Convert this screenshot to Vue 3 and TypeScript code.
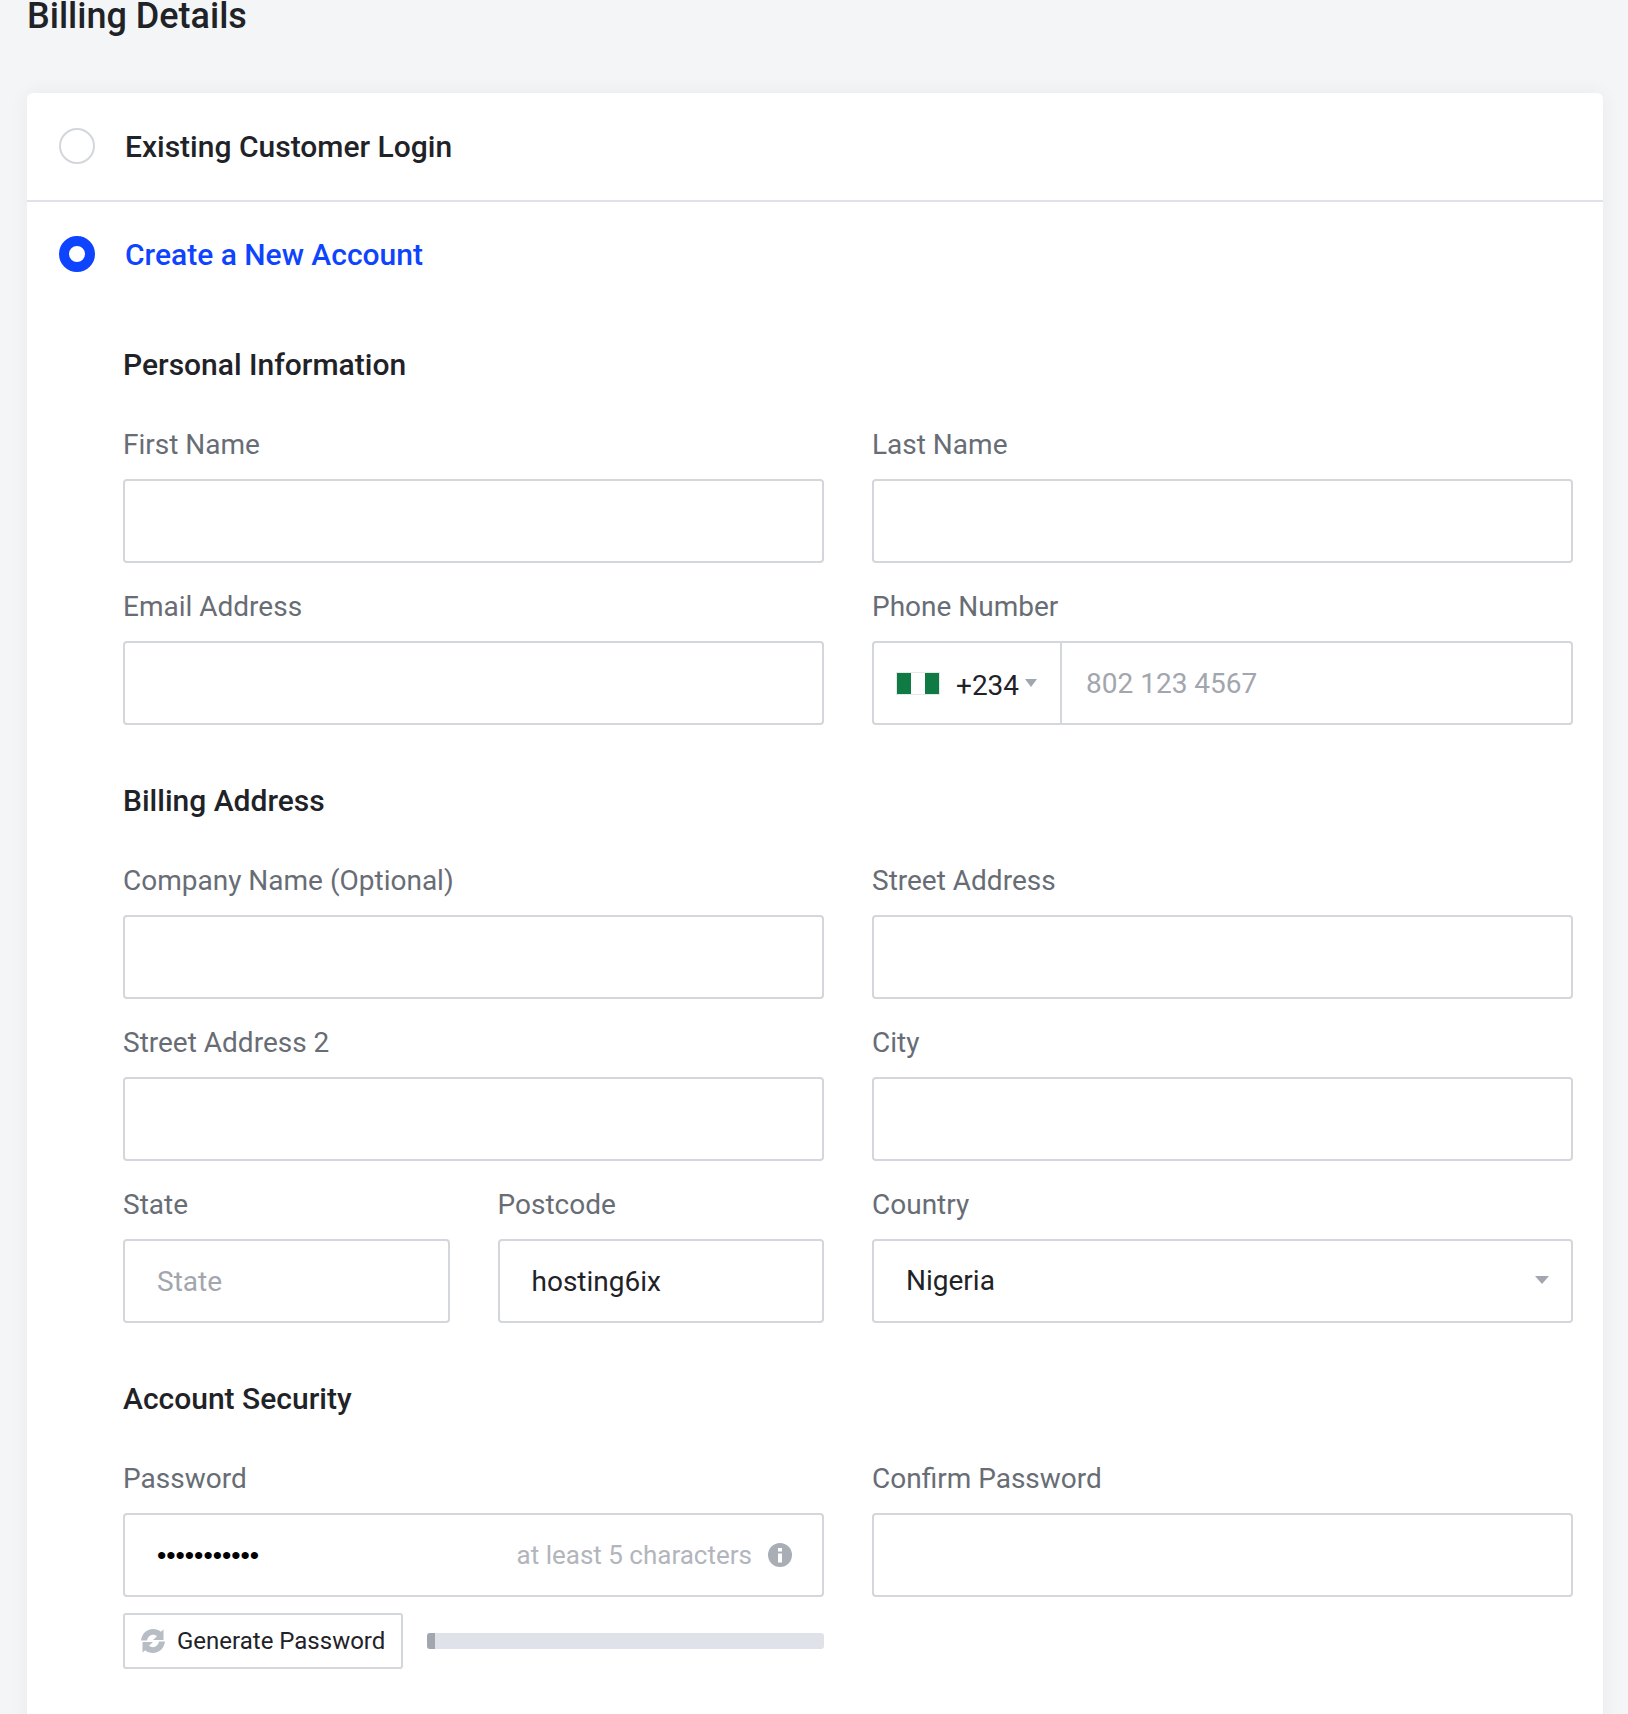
<template>
  <div class="page">
    <h1 class="page-title">Billing Details</h1>

    <div class="card">
      <div class="choice choice-login">
        <span class="radio"></span>
        <span class="choice-label">Existing Customer Login</span>
      </div>

      <div class="choice choice-new">
        <span class="radio radio-on"></span>
        <span class="choice-label choice-label-on">Create a New Account</span>
      </div>

      <div class="form">
        <h2 class="section-title">Personal Information</h2>
        <div class="grid">
          <label class="field" v-for="name in personalFields" :key="name">
            <span class="field-label">{{ name }}</span>
            <input class="text-input" type="text" />
          </label>
          <div class="field">
            <span class="field-label">Email Address</span>
            <input class="text-input" type="text" />
          </div>
          <div class="field">
            <span class="field-label">Phone Number</span>
            <div class="phone">
              <div class="phone-code">
                <span class="flag"><i></i><i></i><i></i></span>
                <span class="dial">+234</span>
                <span class="mini-caret"></span>
              </div>
              <input class="phone-input" type="text" placeholder="802 123 4567" />
            </div>
          </div>
        </div>

        <h2 class="section-title section-gap">Billing Address</h2>
        <div class="grid">
          <label class="field" v-for="name in addressFields" :key="name">
            <span class="field-label">{{ name }}</span>
            <input class="text-input" type="text" />
          </label>
          <div class="split">
            <div class="field">
              <span class="field-label">State</span>
              <input class="text-input" type="text" placeholder="State" />
            </div>
            <div class="field">
              <span class="field-label">Postcode</span>
              <input class="text-input" type="text" value="hosting6ix" />
            </div>
          </div>
          <div class="field">
            <span class="field-label">Country</span>
            <div class="select-wrap">
              <select class="text-input select">
                <option>Nigeria</option>
              </select>
              <span class="select-caret"></span>
            </div>
          </div>
        </div>

        <h2 class="section-title section-gap">Account Security</h2>
        <div class="grid">
          <div class="field">
            <span class="field-label">Password</span>
            <div class="password-wrap">
              <input class="text-input password" type="password" value="hosting6ix1" />
              <div class="password-hint">
                <span>at least 5 characters</span>
                <svg class="info-icon" viewBox="0 0 24 24" aria-hidden="true">
                  <circle cx="12" cy="12" r="12" />
                  <rect class="info-mark" x="10" y="5" width="4" height="3.5" />
                  <rect class="info-mark" x="10" y="10.5" width="4" height="9" />
                </svg>
              </div>
            </div>
            <div class="generate-row">
              <button class="generate-btn" type="button">
                <svg class="sync-icon" viewBox="0 0 24 24" aria-hidden="true">
                  <path d="M0 11.500C.8 5 5.500 0 12 0c3.200 0 5.800 1 7.800 2.800L22.500.500v10.500H12l4-3.800C15 6.400 13.600 5.800 12 5.800c-3 0-5.300 2.300-6 5.700z" />
                  <path d="M24 12.500C23.200 19 18.500 24 12 24c-3.200 0-5.800-1-7.800-2.800L1.500 23.500V13H12l-4 3.800c1 .8 2.400 1.400 4 1.400 3 0 5.300-2.300 6-5.700z" />
                </svg>
                <span>Generate Password</span>
              </button>
              <div class="strength">
                <div class="strength-fill" :style="{ width: strength + '%' }"></div>
              </div>
            </div>
          </div>
          <div class="field">
            <span class="field-label">Confirm Password</span>
            <input class="text-input" type="password" />
          </div>
        </div>
      </div>
    </div>
  </div>
</template>

<script setup lang="ts">
const personalFields: string[] = ['First Name', 'Last Name'];
const addressFields: string[] = ['Company Name (Optional)', 'Street Address', 'Street Address 2', 'City'];
const strength = 2;
</script>

<style>
body {
  background: #f4f5f7;
}
</style>

<style scoped>
.page {
  height: 1714px;
  overflow: hidden;
  padding: 0 25px 0 27px;
  box-sizing: border-box;
  font-family: Roboto, "Liberation Sans", sans-serif;
  color: #1f2328;
}
.page-title {
  margin: 0 0 61px;
  font-size: 36px;
  line-height: 32px;
  font-weight: 500;
}
.card {
  background: #fff;
  border-radius: 6px;
  box-shadow: 0 0 20px rgba(31, 35, 40, 0.05);
  padding-bottom: 100px;
}
.choice {
  display: flex;
  align-items: center;
  padding-left: 32px;
  gap: 30px;
}
.choice-login {
  height: 107px;
  border-bottom: 2px solid #dfe3e8;
}
.choice-new {
  height: 105px;
}
.radio {
  width: 36px;
  height: 36px;
  margin-top: -2px;
  box-sizing: border-box;
  border: 2px solid #d3d6db;
  border-radius: 50%;
  background: #fff;
}
.radio-on {
  border: 10px solid #0f44ff;
}
.choice-label {
  font-size: 30px;
  font-weight: 500;
}
.choice-label-on {
  color: #0f44ff;
}
.form {
  padding: 0 30px 0 96px;
}
.section-title {
  margin: 0;
  padding-top: 38px;
  font-size: 30px;
  line-height: 40px;
  font-weight: 500;
}
.section-gap {
  padding-top: 56px;
}
.grid {
  display: grid;
  grid-template-columns: 1fr 1fr;
  column-gap: 48px;
  row-gap: 26px;
  margin-top: 42px;
}
.split {
  display: grid;
  grid-template-columns: 1fr 1fr;
  column-gap: 48px;
}
.field {
  display: flex;
  flex-direction: column;
  min-width: 0;
}
.field-label {
  font-size: 28px;
  line-height: 36px;
  color: #686d75;
  margin-bottom: 16px;
}
.text-input {
  width: 100%;
  height: 84px;
  box-sizing: border-box;
  padding: 0 32px;
  border: 2px solid #d3d6db;
  border-radius: 4px;
  background: #fff;
  font-family: inherit;
  font-size: 28px;
  color: #1f2328;
  outline: none;
}
.text-input::placeholder,
.phone-input::placeholder {
  color: #a2a6ae;
  opacity: 1;
}
.phone {
  display: flex;
  height: 84px;
  box-sizing: border-box;
  border: 2px solid #d3d6db;
  border-radius: 4px;
}
.phone-code {
  display: flex;
  align-items: center;
  width: 188px;
  padding-left: 23px;
  box-sizing: border-box;
  border-right: 2px solid #d3d6db;
}
.flag {
  display: flex;
  width: 42px;
  height: 21px;
  box-shadow: 0 0 0 1px #e6e7e9;
}
.flag i {
  flex: 1;
  background: #0f7a43;
}
.flag i:nth-child(2) {
  background: #fff;
}
.dial {
  margin-left: 17px;
  margin-top: 5px;
  font-size: 28px;
}
.mini-caret {
  margin-left: 6px;
  border-left: 6px solid transparent;
  border-right: 6px solid transparent;
  border-top: 8px solid #a2a6ae;
}
.phone-input {
  flex: 1;
  min-width: 0;
  border: none;
  outline: none;
  padding: 0 24px;
  font-family: inherit;
  font-size: 28px;
  background: transparent;
}
.select-wrap {
  position: relative;
}
.select {
  appearance: none;
  -webkit-appearance: none;
  display: block;
  padding-bottom: 2px;
}
.select-caret {
  position: absolute;
  right: 24px;
  top: 37px;
  border-left: 7px solid transparent;
  border-right: 7px solid transparent;
  border-top: 8px solid #a2a6ae;
}
.password-wrap {
  position: relative;
}
.password {
  display: block;
  font-family: "Liberation Sans", sans-serif;
  font-size: 26.5px;
  color: #000;
}
.password-hint {
  position: absolute;
  right: 32px;
  top: 0;
  bottom: 0;
  display: flex;
  align-items: center;
  gap: 16px;
  font-size: 26px;
  color: #b2b5bc;
}
.info-icon {
  width: 24px;
  height: 24px;
  fill: #a9adb5;
}
.info-mark {
  fill: #fff;
}
.generate-row {
  display: flex;
  align-items: center;
  gap: 24px;
  margin-top: 16px;
}
.generate-btn {
  display: flex;
  align-items: center;
  gap: 12px;
  width: 280px;
  height: 56px;
  box-sizing: border-box;
  padding: 0 16px;
  border: 2px solid #d3d6db;
  border-radius: 3px;
  background: #fff;
  font-family: inherit;
  font-size: 24px;
  color: #1f2328;
  white-space: nowrap;
}
.sync-icon {
  width: 24px;
  height: 24px;
  fill: #b8bcc4;
  flex: none;
}
.strength {
  flex: 1;
  height: 16px;
  border-radius: 3px;
  background: #dfe2e9;
  overflow: hidden;
}
.strength-fill {
  height: 100%;
  background: #a2a6ae;
}
</style>
